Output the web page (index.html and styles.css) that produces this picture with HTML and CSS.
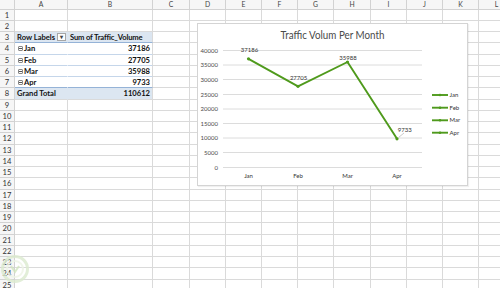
FILE: index.html
```html
<!DOCTYPE html>
<html lang="en">

<head>
    <meta charset="UTF-8">
    <title>Traffic Volume Pivot</title>
    <link rel="stylesheet" href="styles.css">
</head>

<body>
    <div class="sheet">
        <div class="row head">
            <span class="corner"></span><span>A</span><span>B</span><span>C</span><span>D</span><span>E</span><span>F</span><span>G</span><span>H</span><span>I</span><span>J</span><span>K</span><span>L</span>
        </div>
        <div class="row"><span class="num">1</span><span></span><span></span><span></span><span></span><span></span><span></span><span></span><span></span><span></span><span></span><span></span><span></span></div>
        <div class="row"><span class="num">2</span><span></span><span></span><span></span><span></span><span></span><span></span><span></span><span></span><span></span><span></span><span></span><span></span></div>
        <div class="row pivot-head">
            <span class="num">3</span>
            <span class="label">Row Labels <b class="drop">&#9662;</b></span>
            <span class="label">Sum of Traffic_Volume</span>
            <span></span><span></span><span></span><span></span><span></span><span></span><span></span><span></span><span></span><span></span>
        </div>
        <div class="row pivot-item">
            <span class="num">4</span><span class="label"><i class="tog"></i>Jan</span><span class="value">37186</span>
            <span></span><span></span><span></span><span></span><span></span><span></span><span></span><span></span><span></span><span></span>
        </div>
        <div class="row pivot-item">
            <span class="num">5</span><span class="label"><i class="tog"></i>Feb</span><span class="value">27705</span>
            <span></span><span></span><span></span><span></span><span></span><span></span><span></span><span></span><span></span><span></span>
        </div>
        <div class="row pivot-item">
            <span class="num">6</span><span class="label"><i class="tog"></i>Mar</span><span class="value">35988</span>
            <span></span><span></span><span></span><span></span><span></span><span></span><span></span><span></span><span></span><span></span>
        </div>
        <div class="row pivot-item last">
            <span class="num">7</span><span class="label"><i class="tog"></i>Apr</span><span class="value">9733</span>
            <span></span><span></span><span></span><span></span><span></span><span></span><span></span><span></span><span></span><span></span>
        </div>
        <div class="row pivot-total">
            <span class="num">8</span><span class="label">Grand Total</span><span class="value">110612</span>
            <span></span><span></span><span></span><span></span><span></span><span></span><span></span><span></span><span></span><span></span>
        </div>
        <div class="row"><span class="num">9</span><span></span><span></span><span></span><span></span><span></span><span></span><span></span><span></span><span></span><span></span><span></span><span></span></div>
        <div class="row"><span class="num">10</span><span></span><span></span><span></span><span></span><span></span><span></span><span></span><span></span><span></span><span></span><span></span><span></span></div>
        <div class="row"><span class="num">11</span><span></span><span></span><span></span><span></span><span></span><span></span><span></span><span></span><span></span><span></span><span></span><span></span></div>
        <div class="row"><span class="num">12</span><span></span><span></span><span></span><span></span><span></span><span></span><span></span><span></span><span></span><span></span><span></span><span></span></div>
        <div class="row"><span class="num">13</span><span></span><span></span><span></span><span></span><span></span><span></span><span></span><span></span><span></span><span></span><span></span><span></span></div>
        <div class="row"><span class="num">14</span><span></span><span></span><span></span><span></span><span></span><span></span><span></span><span></span><span></span><span></span><span></span><span></span></div>
        <div class="row"><span class="num">15</span><span></span><span></span><span></span><span></span><span></span><span></span><span></span><span></span><span></span><span></span><span></span><span></span></div>
        <div class="row"><span class="num">16</span><span></span><span></span><span></span><span></span><span></span><span></span><span></span><span></span><span></span><span></span><span></span><span></span></div>
        <div class="row"><span class="num">17</span><span></span><span></span><span></span><span></span><span></span><span></span><span></span><span></span><span></span><span></span><span></span><span></span></div>
        <div class="row"><span class="num">18</span><span></span><span></span><span></span><span></span><span></span><span></span><span></span><span></span><span></span><span></span><span></span><span></span></div>
        <div class="row"><span class="num">19</span><span></span><span></span><span></span><span></span><span></span><span></span><span></span><span></span><span></span><span></span><span></span><span></span></div>
        <div class="row"><span class="num">20</span><span></span><span></span><span></span><span></span><span></span><span></span><span></span><span></span><span></span><span></span><span></span><span></span></div>
        <div class="row"><span class="num">21</span><span></span><span></span><span></span><span></span><span></span><span></span><span></span><span></span><span></span><span></span><span></span><span></span></div>
        <div class="row"><span class="num">22</span><span></span><span></span><span></span><span></span><span></span><span></span><span></span><span></span><span></span><span></span><span></span><span></span></div>
        <div class="row"><span class="num">23</span><span></span><span></span><span></span><span></span><span></span><span></span><span></span><span></span><span></span><span></span><span></span><span></span></div>
        <div class="row"><span class="num">24</span><span></span><span></span><span></span><span></span><span></span><span></span><span></span><span></span><span></span><span></span><span></span><span></span></div>
        <div class="row"><span class="num">25</span><span></span><span></span><span></span><span></span><span></span><span></span><span></span><span></span><span></span><span></span><span></span><span></span></div>
    </div>

    <div class="chart">
        <svg width="269" height="161" viewBox="198 24 269 161">
            <text class="title" x="332.5" y="39" textLength="104" lengthAdjust="spacingAndGlyphs">Traffic Volum Per Month</text>

            <g class="grid">
                <line x1="223" y1="50.5" x2="422" y2="50.5" />
                <line x1="223" y1="65" x2="422" y2="65" />
                <line x1="223" y1="79.5" x2="422" y2="79.5" />
                <line x1="223" y1="94.5" x2="422" y2="94.5" />
                <line x1="223" y1="109" x2="422" y2="109" />
                <line x1="223" y1="123.5" x2="422" y2="123.5" />
                <line x1="223" y1="138" x2="422" y2="138" />
                <line x1="223" y1="152.5" x2="422" y2="152.5" />
                <line x1="223" y1="167.5" x2="422" y2="167.5" />
            </g>

            <g class="axis-y">
                <text x="218" y="52.5">40000</text>
                <text x="218" y="67">35000</text>
                <text x="218" y="81.5">30000</text>
                <text x="218" y="96.5">25000</text>
                <text x="218" y="111">20000</text>
                <text x="218" y="125.5">15000</text>
                <text x="218" y="140">10000</text>
                <text x="218" y="154.5">5000</text>
                <text x="218" y="169.5">0</text>
            </g>

            <g class="axis-x">
                <text x="248.5" y="178">Jan</text>
                <text x="298" y="178">Feb</text>
                <text x="347.5" y="178">Mar</text>
                <text x="397" y="178">Apr</text>
            </g>

            <polyline class="series" points="248.5,58.8 298,86.3 347.5,62 397,138.8" />
            <g class="dots">
                <circle cx="248.5" cy="58.8" r="1.6" />
                <circle cx="298" cy="86.3" r="1.6" />
                <circle cx="347.5" cy="62" r="1.6" />
                <circle cx="397" cy="138.8" r="1.6" />
            </g>

            <line class="leader" x1="398.5" y1="137.5" x2="404" y2="133" />
            <g class="data-labels">
                <text x="249.5" y="51.5">37186</text>
                <text x="298.6" y="79.8">27705</text>
                <text x="348" y="59.5">35988</text>
                <text x="404.7" y="131.5">9733</text>
            </g>

            <g class="legend">
                <line x1="432" y1="95" x2="448" y2="95" />
                <circle cx="440" cy="95" r="1.3" />
                <text x="449.5" y="97">Jan</text>
                <line x1="432" y1="107.7" x2="448" y2="107.7" />
                <circle cx="440" cy="107.7" r="1.3" />
                <text x="449.5" y="109.7">Feb</text>
                <line x1="432" y1="120.3" x2="448" y2="120.3" />
                <circle cx="440" cy="120.3" r="1.3" />
                <text x="449.5" y="122.3">Mar</text>
                <line x1="432" y1="132.7" x2="448" y2="132.7" />
                <circle cx="440" cy="132.7" r="1.3" />
                <text x="449.5" y="134.7">Apr</text>
            </g>
        </svg>
    </div>

    <!-- faint watermark in the corner -->
    <div class="mark">
        <svg width="30" height="30" viewBox="0 0 30 30">
            <circle cx="15" cy="15" r="12.5" fill="none" stroke="#dcebcf" stroke-width="3" />
            <circle cx="15" cy="15" r="8" fill="none" stroke="#eef5e6" stroke-width="2" />
            <path d="M11 12 L15 18 L19 12" fill="none" stroke="#d2e6bf" stroke-width="2" />
        </svg>
    </div>
</body>

</html>
```

FILE: styles.css
```css
* {
    box-sizing: border-box;
    margin: 0;
    padding: 0;
}

body {
    background: white;
    font-family: Lato, "Open Sans", sans-serif;
    overflow: hidden;
    width: 500px;
    height: 288px;
    position: relative;
}

.sheet {
    width: 520px;
}

.row {
    display: grid;
    grid-template-columns: 15px 53px 85px 37px 36px 36px 36px 36px 37px 36px 36px 36px 36px;
    height: 11.25px;
}

.row > span {
    border-right: 1px solid #dadada;
    border-bottom: 1px solid #dadada;
    font-size: 7.6px;
    line-height: 10.5px;
    white-space: nowrap;
    overflow: hidden;
    color: #111;
}

.row.head {
    height: 9.5px;
}

.row.head > span {
    background: #f6f6f6;
    border-color: #d2d2d2;
    color: #444;
    font-size: 6.8px;
    line-height: 9px;
    text-align: center;
}

.row > .num {
    background: #f6f6f6;
    border-color: #d2d2d2;
    color: #333;
    text-align: center;
    font-size: 7.6px;
}

/* pivot table */
.row .label {
    font-weight: bold;
    padding-left: 2px;
    position: relative;
}

.row .value {
    font-weight: bold;
    text-align: right;
    padding-right: 2px;
}

.pivot-head .label {
    background: #dce6f1;
    border-bottom-color: #95b3d7;
}

.pivot-head .label:nth-child(2) {
    border-right-color: #dce6f1;
}

.pivot-head .label:nth-child(3) {
    letter-spacing: -0.15px;
}

.drop {
    position: absolute;
    right: 1px;
    top: 1px;
    width: 9px;
    height: 8px;
    border: 1px solid #a6a6a6;
    background: #fdfdfd;
    color: #444;
    font-size: 6px;
    line-height: 6px;
    text-align: center;
}

.pivot-item .label,
.pivot-item .value {
    border-bottom-color: #c5d6ea;
}

.pivot-item .label {
    border-right-color: white;
    padding-left: 3px;
}

.pivot-item.last .label,
.pivot-item.last .value {
    border-bottom-color: #95b3d7;
}

.tog {
    display: inline-block;
    width: 5px;
    height: 5px;
    border: 1px solid #888;
    border-radius: 1px;
    margin-right: 1px;
    position: relative;
    top: 0;
}

.tog::after {
    content: "";
    position: absolute;
    left: 0;
    top: 1px;
    width: 3px;
    height: 0;
    border-top: 1px solid #555;
}

.pivot-total .label,
.pivot-total .value {
    background: #dce6f1;
}

.pivot-total .label {
    border-right-color: #dce6f1;
}

/* chart over the grid */
.chart {
    position: absolute;
    left: 197px;
    top: 23px;
    width: 271px;
    height: 163px;
    border: 1px solid #d4d4d4;
    background: white;
    box-shadow: 1px 1px 1px rgba(0, 0, 0, 0.06);
}

.chart svg {
    display: block;
    font-family: Lato, "Open Sans", sans-serif;
}

.title {
    font-size: 10.5px;
    fill: #4a4a4a;
    text-anchor: middle;
}

.grid line {
    stroke: #dcdcdc;
    stroke-width: 1;
}

.axis-y text {
    font-size: 6px;
    fill: #4a4a4a;
    text-anchor: end;
}

.axis-x text,
.data-labels text {
    font-size: 6px;
    fill: #333;
    text-anchor: middle;
}

.series {
    fill: none;
    stroke: #4f9a1c;
    stroke-width: 1.9;
    stroke-linejoin: round;
}

.dots circle,
.legend circle {
    fill: #4f9a1c;
}

.leader {
    stroke: #a6a6a6;
    stroke-width: 0.6;
}

.legend line {
    stroke: #4f9a1c;
    stroke-width: 1.9;
}

.legend text {
    font-size: 6px;
    fill: #333;
}

.mark {
    position: absolute;
    left: 0;
    top: 254px;
    opacity: 0.8;
}
```
